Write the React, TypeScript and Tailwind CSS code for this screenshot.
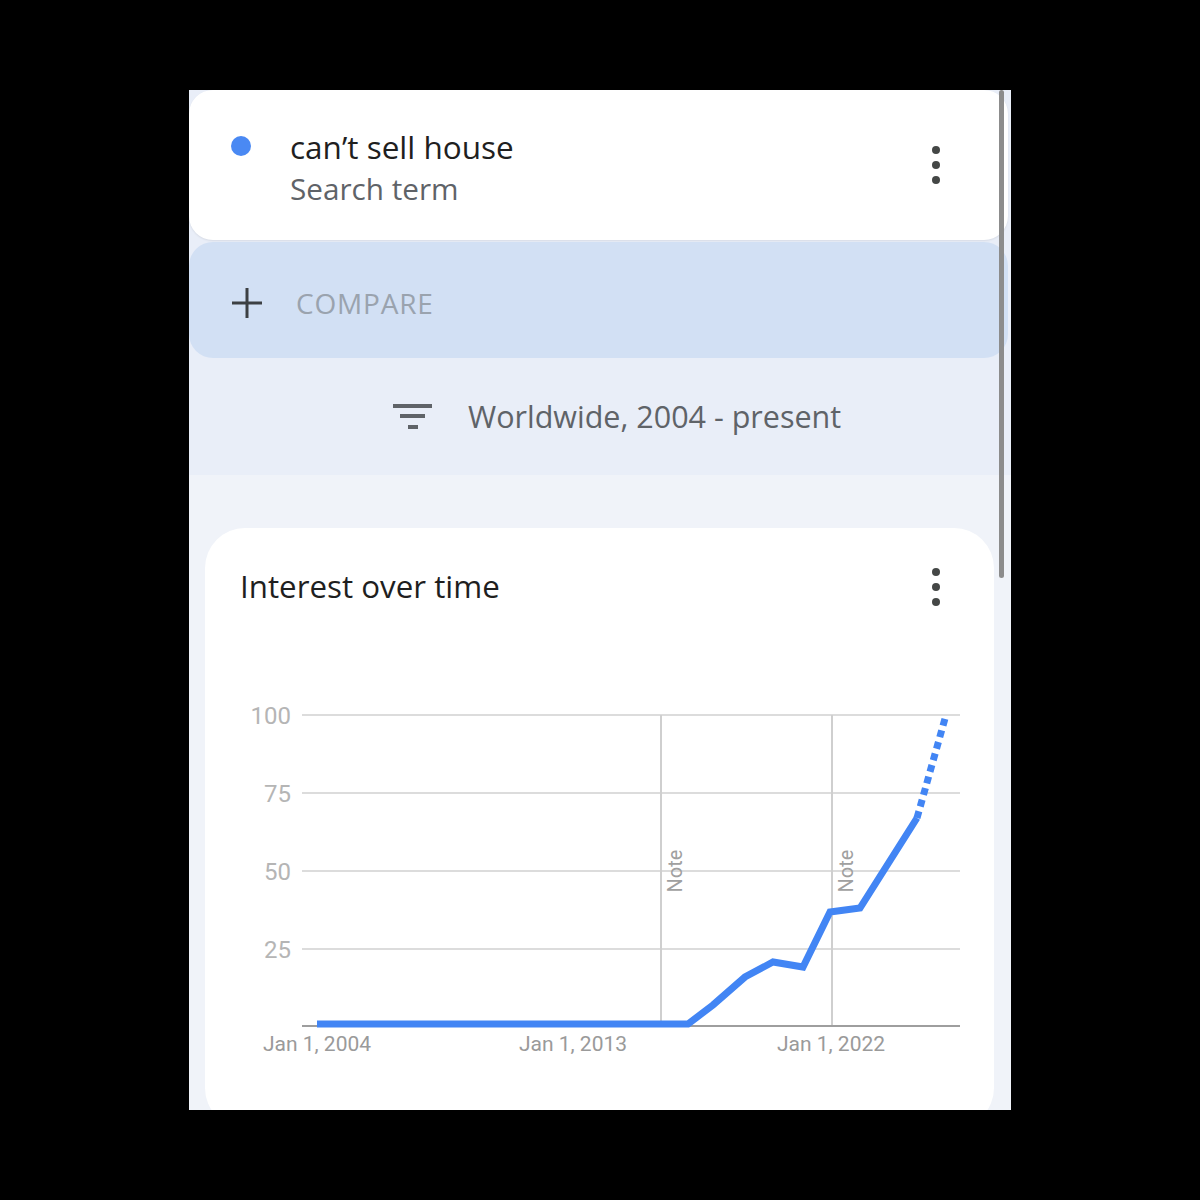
import React from "react";

const font = { fontFamily: "Roboto, 'Noto Sans', sans-serif" };
const gfont = { fontFamily: "'Open Sans', Roboto, sans-serif" };

function Kebab() {
  return (
    <div className="flex flex-col items-center gap-[7px]">
      <span className="block h-[8px] w-[8px] rounded-full bg-[#444746]" />
      <span className="block h-[8px] w-[8px] rounded-full bg-[#444746]" />
      <span className="block h-[8px] w-[8px] rounded-full bg-[#444746]" />
    </div>
  );
}

function Chart() {
  const gridY = [67, 145, 223, 301];
  const labels = ["100", "75", "50", "25"];
  const pts: [number, number][] = [
    [112, 376],
    [483, 376],
    [508, 357],
    [540, 329],
    [568, 314],
    [598, 319],
    [625, 264],
    [655, 260],
    [712, 170],
  ];
  const d = pts.map((p, i) => `${i === 0 ? "M" : "L"}${p[0]} ${p[1]}`).join(" ");
  return (
    <svg width="789" height="462" viewBox="0 0 789 462" className="block">
      {gridY.map((y, i) => (
        <g key={y}>
          <line x1="97" x2="755" y1={y} y2={y} stroke="#dcdcdc" strokeWidth="2" />
          <text x="86" y={y + 9} textAnchor="end" fontSize="24" fill="#b5b5b5" style={font}>
            {labels[i]}
          </text>
        </g>
      ))}
      <line x1="456" x2="456" y1="67" y2="378" stroke="#cfcfcf" strokeWidth="2" />
      <line x1="627" x2="627" y1="67" y2="378" stroke="#cfcfcf" strokeWidth="2" />
      <text
        x="470"
        y="223"
        transform="rotate(-90 470 223)"
        textAnchor="middle"
        dominantBaseline="central"
        fontSize="20"
        fill="#a0a0a0"
        style={font}
      >
        Note
      </text>
      <text
        x="641"
        y="223"
        transform="rotate(-90 641 223)"
        textAnchor="middle"
        dominantBaseline="central"
        fontSize="20"
        fill="#a0a0a0"
        style={font}
      >
        Note
      </text>
      <line x1="97" x2="755" y1="378" y2="378" stroke="#9e9e9e" strokeWidth="2" />
      <path d={d} fill="none" stroke="#4285f4" strokeWidth="7" strokeLinejoin="miter" />
      <line x1="712" y1="170" x2="741" y2="67" stroke="#4285f4" strokeWidth="7" strokeDasharray="7 5" />
      <text x="112" y="403" textAnchor="middle" fontSize="21" fill="#9a9a9a" style={font}>
        Jan 1, 2004
      </text>
      <text x="368" y="403" textAnchor="middle" fontSize="21" fill="#9a9a9a" style={font}>
        Jan 1, 2013
      </text>
      <text x="626" y="403" textAnchor="middle" fontSize="21" fill="#9a9a9a" style={font}>
        Jan 1, 2022
      </text>
    </svg>
  );
}

export default function App() {
  return (
    <div className="h-[1200px] w-[1200px] bg-black pl-[189px] pt-[90px]" style={gfont}>
      <div className="relative h-[1020px] w-[822px] overflow-hidden bg-[#f0f3f9]">
        <div className="bg-[#e9eef8] pr-[3px]">
          <div className="flex h-[150px] items-start rounded-[24px] bg-white shadow-[0_1px_2px_rgba(0,0,0,0.08)]">
            <div className="ml-[42px] mt-[46px] h-[20px] w-[20px] rounded-full bg-[#4a89f3]" />
            <div className="ml-[39px] mt-[37px] flex flex-col">
              <span className="text-[31.5px] leading-[40px] text-[#1f1f1f]">can’t sell house</span>
              <span className="mt-[2px] text-[29.7px] leading-[40px] text-[#5f6368]">Search term</span>
            </div>
            <div className="ml-auto mr-[68px] mt-[56px]">
              <Kebab />
            </div>
          </div>
          <div className="mt-[2px] flex h-[116px] items-center rounded-[24px] bg-[#d2e0f4] pt-[6px]">
            <svg width="32" height="32" viewBox="0 0 32 32" className="ml-[42px]">
              <line x1="16" y1="1" x2="16" y2="31" stroke="#3c4043" strokeWidth="3" />
              <line x1="1" y1="16" x2="31" y2="16" stroke="#3c4043" strokeWidth="3" />
            </svg>
            <span className="ml-[33px] text-[28px] tracking-[0.8px] text-[#9aa3ae]">COMPARE</span>
          </div>
          <div className="flex h-[117px] items-center pl-[204px]">
            <svg width="40" height="26" viewBox="0 0 40 26">
              <rect x="0" y="0" width="39" height="4" fill="#5f6368" />
              <rect x="7" y="10" width="25" height="4" fill="#5f6368" />
              <rect x="15" y="21" width="10" height="4" fill="#5f6368" />
            </svg>
            <span className="ml-[35px] text-[30.5px] text-[#5f6368]">Worldwide, 2004 - present</span>
          </div>
        </div>
        <div className="px-[16px] pt-[53px]">
          <div className="h-[600px] w-[789px] rounded-[40px] bg-white">
            <div className="flex h-[120px] items-start">
              <span className="ml-[35px] mt-[38px] text-[31.3px] leading-[40px] text-[#1f1f1f]">
                Interest over time
              </span>
              <div className="ml-auto mr-[54px] mt-[40px]">
                <Kebab />
              </div>
            </div>
            <Chart />
          </div>
        </div>
        <div className="absolute right-[7px] top-0 h-[488px] w-[5px] rounded-full bg-[#8c8c8c]" />
      </div>
    </div>
  );
}
